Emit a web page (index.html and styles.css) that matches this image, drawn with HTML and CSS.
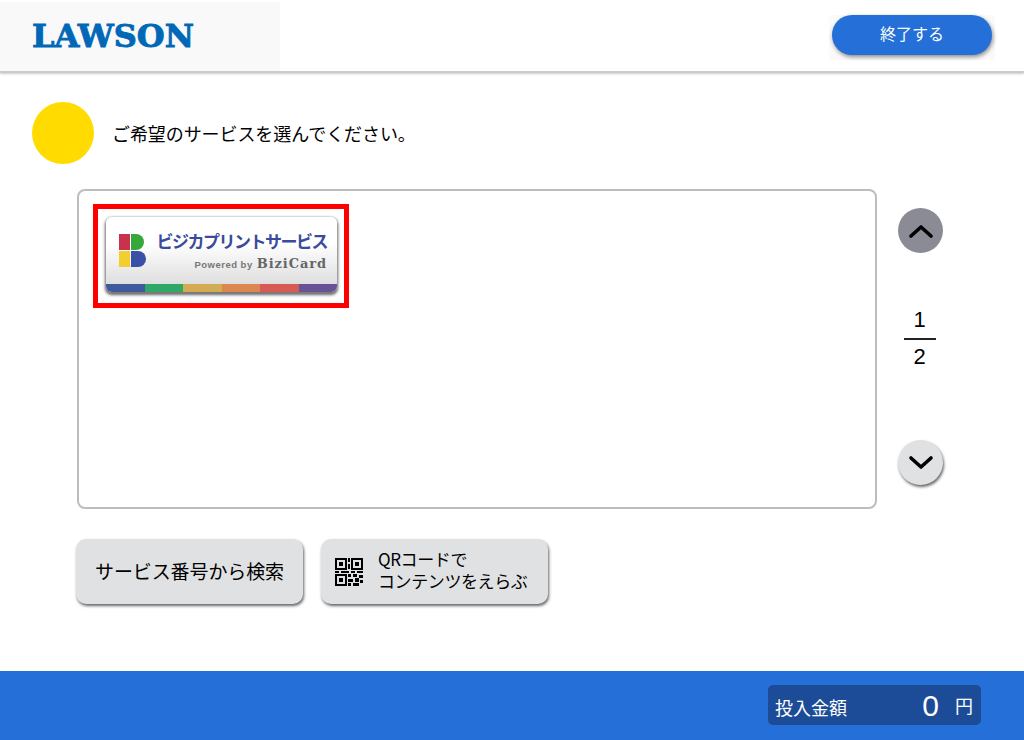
FILE: index.html
```html
<!DOCTYPE html>
<html lang="ja">
<head>
<meta charset="utf-8">
<title>LAWSON</title>
<link rel="stylesheet" href="styles.css">
</head>
<body>
<div class="page">
  <header class="header">
    <div class="logo-box"><span class="logo">LAWSON</span></div>
    <div class="end-wrap"><button class="end-btn">終了する</button></div>
  </header>
  <main class="main">
    <div class="prompt">
      <span class="dot"></span>
      <p class="prompt-text">ご希望のサービスを選んでください。</p>
    </div>
    <div class="list-row">
      <section class="list-box">
        <div class="selected">
          <div class="banner">
            <div class="banner-body">
              <svg class="b-mark" width="27" height="33" viewBox="0 0 27 33">
                <rect x="0" y="0" width="11" height="16" fill="#c8324f"/>
                <path d="M12 0h5a8 8 0 0 1 8 8v0a8 8 0 0 1-8 8h-5z" fill="#36a73a"/>
                <rect x="0" y="17" width="11" height="16" fill="#f2cf2e"/>
                <path d="M12 17h7a8 8 0 0 1 0 16h-7z" fill="#3a4fa8"/>
              </svg>
              <div class="banner-text">
                <div class="banner-title">ビジカプリントサービス</div>
                <div class="banner-sub">Powered by <b class="brand">BiziCard</b></div>
              </div>
            </div>
            <div class="stripe">
              <span class="s1"></span><span class="s2"></span><span class="s3"></span><span class="s4"></span><span class="s5"></span><span class="s6"></span>
            </div>
          </div>
        </div>
      </section>
      <aside class="pager">
        <button class="round up"><svg width="26" height="16" viewBox="0 0 26 16"><path d="M3 13L13 4l10 9" fill="none" stroke="#000" stroke-width="3.600" stroke-linecap="round" stroke-linejoin="round"/></svg></button>
        <div class="pages"><span class="num top">1</span><span class="num">2</span></div>
        <button class="round down"><svg width="26" height="16" viewBox="0 0 26 16"><path d="M3 3l10 9 10-9" fill="none" stroke="#000" stroke-width="3.600" stroke-linecap="round" stroke-linejoin="round"/></svg></button>
      </aside>
    </div>
    <div class="actions">
      <button class="action">サービス番号から検索</button>
      <button class="action qr">
        <svg class="qr-icon" width="28" height="28" viewBox="0 0 28 28" shape-rendering="crispEdges">
          <path fill="#000" fill-rule="evenodd" d="M0 0h12v12H0zM2 2v8h8V2zM4 4h4v4H4zM16 0h12v12H16zM18 2v8h8V2zM20 4h4v4h-4zM0 16h12v12H0zM2 18v8h8v-8zM4 20h4v4H4zM13 0h2v4h-2zM13 6h2v5h-2zM0 13h4v2H0zM6 13h8v2H6zM16 13h4v2h-4zM22 13h6v2h-6zM13 16h3v3h-3zM18 16h4v3h-4zM24 17h4v3h-4zM13 21h5v3h-5zM20 20h4v4h-4zM25 22h3v3h-3zM13 25h3v3h-3zM18 25h6v3h-6z"/>
        </svg>
        <span class="qr-text">QRコードで<br>コンテンツをえらぶ</span>
      </button>
    </div>
  </main>
  <footer class="footer">
    <div class="amount">
      <span class="amount-label">投入金額</span>
      <span class="amount-value">0</span>
      <span class="amount-unit">円</span>
    </div>
  </footer>
</div>
</body>
</html>
```
FILE: styles.css
```css
* { box-sizing: border-box; }
html, body { margin: 0; padding: 0; }
body {
  font-family: "Noto Sans CJK JP", "Liberation Sans", sans-serif;
  background: #fff;
  color: #000;
}
button { font-family: inherit; border: 0; padding: 0; margin: 0; }
.page { width: 1024px; height: 740px; display: flex; flex-direction: column; overflow: hidden; }

.header {
  height: 73px;
  flex: none;
  display: flex;
  justify-content: space-between;
  border-bottom: 2px solid #cbcbcb;
  box-shadow: 0 1px 2px #ccc;
  padding-top: 2px;
}
.logo-box {
  width: 280px;
  height: 69px;
  background: #f9f9f9;
  padding-left: 32px;
  display: flex;
  align-items: center;
}
.logo {
  font-family: "DejaVu Serif", serif;
  font-weight: 700;
  font-size: 32px;
  line-height: 24px;
  color: #0068b7;
  -webkit-text-stroke: 0.9px #0068b7;
  display: inline-block;
  margin-top: -1px;
}
.end-wrap {
  width: 166px;
  height: 45px;
  margin: 13px 29px 0 0;
  background: #fafafa;
  padding-left: 3px;
}
.end-btn {
  width: 160px;
  height: 40px;
  border-radius: 20px;
  background: #2470d8;
  color: #fff;
  font-size: 16px;
  padding-bottom: 4px;
  box-shadow: 1px 2px 4px rgba(0, 0, 0, .45);
  display: block;
}

.main { flex: 1; padding: 29px 0 0 32px; }
.prompt { display: flex; align-items: center; height: 62px; }
.dot { width: 62px; height: 62px; border-radius: 50%; background: #ffdb00; flex: none; }
.prompt-text { margin: 0 0 0 18px; font-size: 18px; letter-spacing: -.08px; line-height: 62px; }

.list-row { display: flex; margin: 25px 0 0 45px; }
.list-box {
  width: 800px;
  height: 320px;
  border: 2px solid #bdbdbd;
  border-radius: 8px;
  padding: 13px 0 0 14px;
}
.selected {
  width: 256px;
  height: 104px;
  border: 5px solid #f00;
  padding: 8px 0 0 8px;
}
.banner {
  width: 231px;
  height: 75px;
  border-radius: 6px;
  background: linear-gradient(#fff 35%, #d8d8d8 100%);
  box-shadow: 0 0 2px #aaa, 0 2px 3px 1px #666;
  display: flex;
  flex-direction: column;
  overflow: hidden;
}
.banner-body { flex: 1; display: flex; padding: 17px 0 0 13px; }
.b-mark { flex: none; }
.banner-text { margin-left: 9px; width: 172px; display: flex; flex-direction: column; align-items: flex-end; }
.banner-title {
  font-size: 17px;
  font-weight: 700;
  line-height: 20px;
  color: #3a4a9c;
  letter-spacing: -1.5px;
  margin-top: -3px;
  white-space: nowrap;
}
.banner-sub {
  font-family: "Liberation Sans", sans-serif;
  font-size: 9.500px;
  line-height: 14px;
  font-weight: 700;
  color: #777;
  margin-top: 6px;
  letter-spacing: .5px;
  white-space: nowrap;
}
.brand { font-family: "DejaVu Serif", serif; font-size: 13px; color: #666; margin-left: 1px; letter-spacing: .9px; }
.stripe { height: 8px; display: flex; flex: none; }
.stripe span { flex: 1; }
.s1 { background: #3d5a9c; }
.s2 { background: #2fa866; }
.s3 { background: #d2ab52; }
.s4 { background: #dc8650; }
.s5 { background: #d85a55; }
.s6 { background: #665294; }

.pager {
  width: 87px;
  height: 320px;
  display: flex;
  flex-direction: column;
  align-items: center;
  padding: 19px 0 24px;
  justify-content: space-between;
}
.round {
  width: 45px;
  height: 45px;
  border-radius: 50%;
  display: flex;
  align-items: center;
  justify-content: center;
  flex: none;
}
.up { background: #8b8b96; }
.down { background: #e0e1e3; box-shadow: 1px 2px 3px #666; }
.pages { display: flex; flex-direction: column; align-items: center; width: 32px; margin: 0 2px 17px 0; }
.num { font-family: "Liberation Sans", sans-serif; font-size: 22px; line-height: 33px; height: 34px; width: 100%; text-align: center; }
.top { border-bottom: 2px solid #222; height: 38px; line-height: 36px; }

.actions { display: flex; gap: 18px; margin: 30px 0 0 44px; }
.action {
  width: 227px;
  height: 65px;
  border-radius: 10px;
  background: #e0e1e3;
  font-size: 19px;
  letter-spacing: -.1px;
  color: #000;
  padding-bottom: 3px;
  box-shadow: 1px 2px 3px #666;
}
.qr { display: flex; align-items: center; padding-left: 14px; text-align: left; }
.qr-icon { flex: none; margin-top: 3px; }
.qr-text { margin-left: 15px; font-size: 17px; line-height: 22px; letter-spacing: -.4px; white-space: nowrap; }

.footer {
  height: 69px;
  flex: none;
  background: #2470d8;
  padding: 14px 43px 0 0;
  display: flex;
  justify-content: flex-end;
}
.amount {
  width: 213px;
  height: 40px;
  background: #1c4c98;
  border-radius: 5px;
  color: #fff;
  display: flex;
  align-items: center;
  padding: 0 8px 0 7px;
}
.amount-label { font-size: 18px; flex: 1; margin-top: 4px; }
.amount-value { font-family: "Liberation Sans", sans-serif; font-size: 30px; margin-right: 16px; margin-top: 2px; }
.amount-unit { font-size: 18px; }
```
